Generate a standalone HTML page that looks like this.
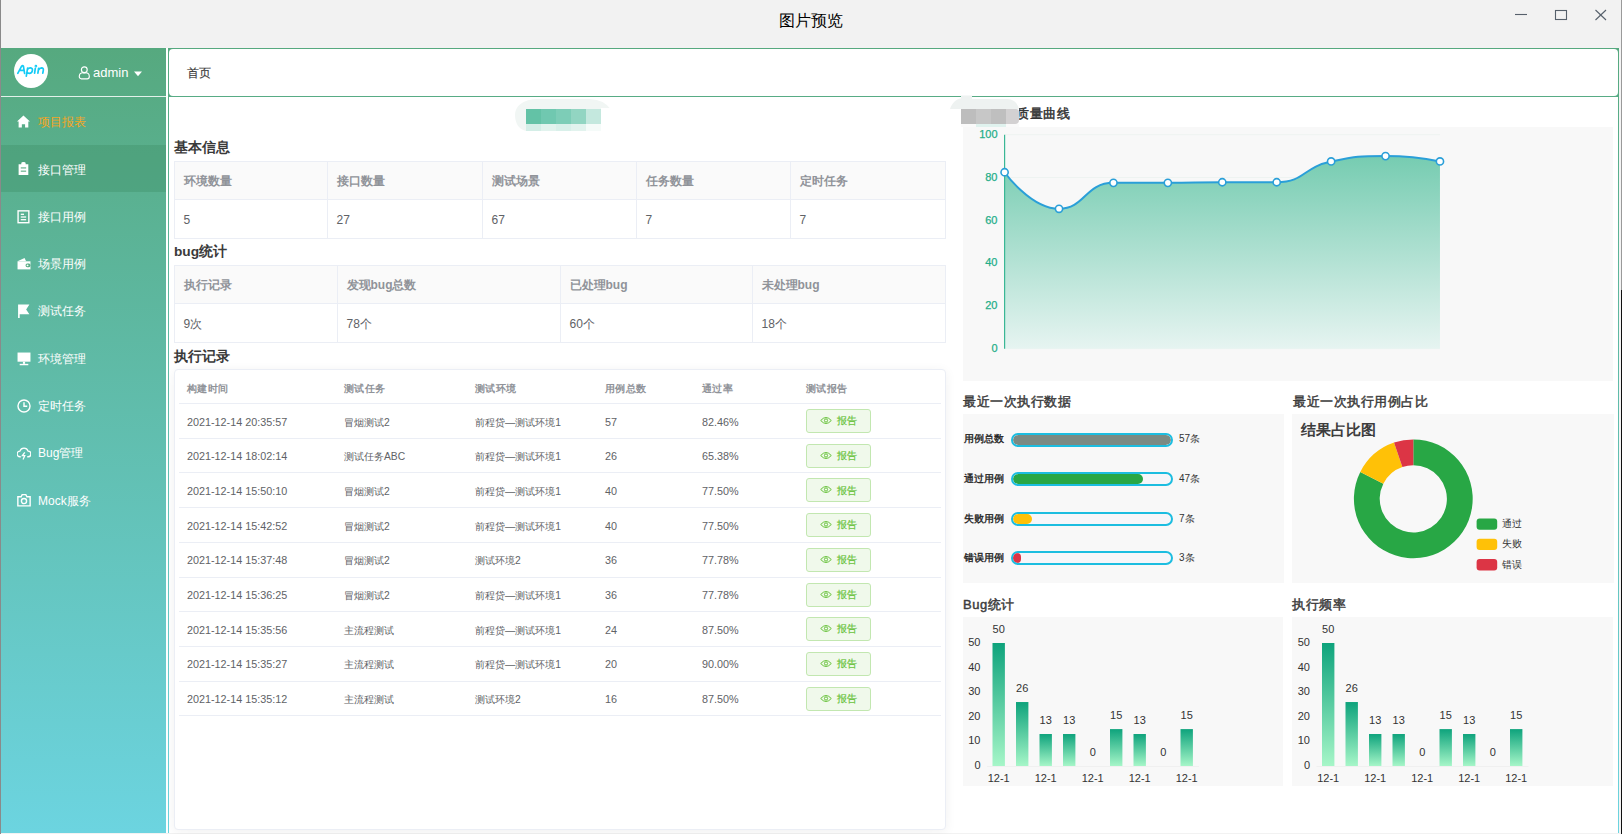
<!DOCTYPE html>
<html><head><meta charset="utf-8"><title>图片预览</title>
<style>
*{margin:0;padding:0;box-sizing:border-box}
html,body{width:1622px;height:834px;overflow:hidden;background:#f2f2f2;font-family:"Liberation Sans", sans-serif;position:relative}
.abs{position:absolute}
.t{position:absolute;white-space:nowrap}
</style></head><body>

<div class="abs" style="left:0;top:0;width:1px;height:834px;background:#8a8a8a"></div>
<div class="abs" style="left:1621px;top:0;width:1px;height:834px;background:#9a9a9a"></div>
<div class="abs" style="left:1621px;top:290px;width:1px;height:544px;background:#111"></div>
<div class="t" style="left:0;width:1622px;text-align:center;top:9px;font-size:16px;line-height:24px;color:#000">图片预览</div>
<svg class="abs" style="left:1500px;top:0" width="121" height="40"><g stroke="#56606b" stroke-width="1.1" fill="none"><line x1="15" y1="14.5" x2="27" y2="14.5"/><rect x="55.5" y="10.5" width="11" height="9"/><line x1="95.5" y1="10" x2="106" y2="20"/><line x1="106" y1="10" x2="95.5" y2="20"/></g></svg>
<div class="abs" style="left:1px;top:48px;width:1620px;height:785px;background:linear-gradient(to bottom,#56a97f 0%,#6cd4e0 100%)"></div>
<div class="abs" style="left:166px;top:48px;width:2px;height:785px;background:#fff"></div>
<div class="abs" style="left:1619px;top:48px;width:2px;height:785px;background:#f4f4f4"></div>
<div class="abs" style="left:1px;top:95.5px;width:165px;height:1.5px;background:#e3f1ea"></div>
<div class="abs" style="left:169px;top:49px;width:1449px;height:47px;background:#fff;border-radius:4px"></div>
<div class="t" style="left:187px;top:65px;font-size:12px;line-height:16px;color:#3a3a3a;-webkit-text-stroke:0.15px #3a3a3a">首页</div>
<div class="abs" style="left:169px;top:97px;width:1449px;height:736px;background:#fff"></div>
<div class="abs" style="left:14px;top:54px;width:34px;height:34px;border-radius:50%;background:#fff"></div>
<svg class="abs" style="left:0;top:0" width="60" height="90"><g fill="none" stroke="#14cbf6" stroke-width="1.7" stroke-linecap="round" stroke-linejoin="round"><path d="M17.8,73.3 L21.6,66.2 Q22.6,64.9 23.4,66.2 L24.6,73.3 M19.6,70.4 L24.1,70.4"/><path d="M27.6,68.2 L26.3,76.2 M27.4,69.6 Q28.5,67.8 30.6,67.9 Q32.8,68.2 32.4,70.6 Q31.9,73.2 29.4,73.3 Q27.6,73.3 26.9,72.2"/><path d="M35.3,68.4 L34.6,73.2"/><circle cx="35.9" cy="66.2" r="0.5"/><path d="M38.6,68.4 L37.9,73.2 M38.4,70 Q39.6,67.9 41.6,67.9 Q43.7,68 43.3,70.3 L42.8,73.2"/></g></svg>
<svg class="abs" style="left:78px;top:66px" width="13" height="14" viewBox="0 0 13 14"><g fill="none" stroke="#fff" stroke-width="1.15"><circle cx="6.3" cy="3.7" r="2.9"/><path d="M1.3,10.2 a3.6,3.6 0 0 1 3.6,-3.4 h2.8 a3.6,3.6 0 0 1 3.6,3.4 v0.6 a2,2 0 0 1 -2,2 h-6 a2,2 0 0 1 -2,-2 z"/></g></svg>
<div class="t" style="left:93px;top:64px;font-size:13px;line-height:18px;color:#fff">admin</div>
<svg class="abs" style="left:134px;top:71px" width="9" height="6"><path d="M0,0.5 L8,0.5 L4,5.2z" fill="#fff"/></svg>
<div class="abs" style="left:1px;top:145px;width:165px;height:47px;background:rgba(60,140,100,0.35)"></div>
<svg class="abs" style="left:17px;top:115.0px" width="14" height="14" viewBox="0 0 13 13"><path d="M6,0.5 L12,6 L10.5,6 L10.5,11.5 L7.5,11.5 L7.5,8.5 L4.5,8.5 L4.5,11.5 L1.5,11.5 L1.5,6 L0,6 Z" fill="#fff"/></svg>
<div class="t" style="left:38px;top:114.2px;font-size:12px;line-height:16px;color:#f5a623">项目报表</div>
<svg class="abs" style="left:17px;top:162.3px" width="14" height="14" viewBox="0 0 13 13"><path d="M1.5,2 h2.5 v-1 a2,1 0 0 1 4,0 v1 h2.5 v10 h-9 z" fill="#fff"/><g stroke="#56a97f" stroke-width="1"><line x1="3.5" y1="5.5" x2="8.5" y2="5.5"/><line x1="3.5" y1="8.5" x2="8.5" y2="8.5"/></g></svg>
<div class="t" style="left:38px;top:161.5px;font-size:12px;line-height:16px;color:#fff">接口管理</div>
<svg class="abs" style="left:17px;top:209.6px" width="14" height="14" viewBox="0 0 13 13"><rect x="1" y="0.8" width="10" height="11" fill="none" stroke="#fff" stroke-width="1.3"/><g stroke="#fff" stroke-width="1.2"><line x1="3.5" y1="4" x2="6.5" y2="4"/><line x1="3.5" y1="6.5" x2="8.5" y2="6.5"/><line x1="3.5" y1="9" x2="8.5" y2="9"/></g></svg>
<div class="t" style="left:38px;top:208.8px;font-size:12px;line-height:16px;color:#fff">接口用例</div>
<svg class="abs" style="left:17px;top:256.9px" width="14" height="14" viewBox="0 0 13 13"><path d="M0.5,4 L7,1 L8.5,4 Z" fill="#fff"/><rect x="0.5" y="4" width="12" height="7.5" fill="#fff"/><rect x="8" y="6" width="4.5" height="3.5" rx="1.5" fill="#58ac84"/><circle cx="9.8" cy="7.75" r="0.9" fill="#fff"/></svg>
<div class="t" style="left:38px;top:256.1px;font-size:12px;line-height:16px;color:#fff">场景用例</div>
<svg class="abs" style="left:17px;top:304.2px" width="14" height="14" viewBox="0 0 13 13"><path d="M1,0.5 h10.5 l-3,4.5 l3,4.5 h-9 v3.5 h-1.5z" fill="#fff"/></svg>
<div class="t" style="left:38px;top:303.4px;font-size:12px;line-height:16px;color:#fff">测试任务</div>
<svg class="abs" style="left:17px;top:351.5px" width="14" height="14" viewBox="0 0 13 13"><rect x="0.5" y="0.5" width="12" height="8.5" fill="#fff"/><rect x="5.5" y="9" width="2" height="2" fill="#fff"/><rect x="2.5" y="11" width="8" height="1.3" fill="#fff"/></svg>
<div class="t" style="left:38px;top:350.7px;font-size:12px;line-height:16px;color:#fff">环境管理</div>
<svg class="abs" style="left:17px;top:398.8px" width="14" height="14" viewBox="0 0 13 13"><circle cx="6.5" cy="6.5" r="5.6" fill="none" stroke="#fff" stroke-width="1.3"/><path d="M6.5,3 V6.8 H9.5" fill="none" stroke="#fff" stroke-width="1.3"/></svg>
<div class="t" style="left:38px;top:398.0px;font-size:12px;line-height:16px;color:#fff">定时任务</div>
<svg class="abs" style="left:17px;top:446.1px" width="14" height="14" viewBox="0 0 13 13"><path d="M3.5,10 h-0.8 a2.6,2.6 0 0 1 0,-5.2 a4,4 0 0 1 7.6,0 a2.6,2.6 0 0 1 0,5.2 h-0.8" fill="none" stroke="#fff" stroke-width="1.2"/><path d="M7.2,6 L5,9 H7.2 L5.6,12.5" fill="none" stroke="#fff" stroke-width="1.2"/></svg>
<div class="t" style="left:38px;top:445.3px;font-size:12px;line-height:16px;color:#fff">Bug管理</div>
<svg class="abs" style="left:17px;top:493.4px" width="14" height="14" viewBox="0 0 13 13"><path d="M0.8,3.5 h3 l1,-2 h3.4 l1,2 h3 v8.5 h-11.4z" fill="none" stroke="#fff" stroke-width="1.3"/><circle cx="6.5" cy="7.5" r="2.4" fill="none" stroke="#fff" stroke-width="1.3"/></svg>
<div class="t" style="left:38px;top:492.6px;font-size:12px;line-height:16px;color:#fff">Mock服务</div>
<svg class="abs" style="left:0;top:0" width="700" height="140"><path d="M601,108 L609.5,108 C604,101 597,99 585,99 L538,99 C523,99 515,106 515,115 C515,124 520,130.5 527,131 L601,131 Z" fill="#f1f6f4"/></svg>
<div class="abs" style="left:526px;top:109px;width:15px;height:15px;background:#63c2a6"></div>
<div class="abs" style="left:526px;top:124px;width:15px;height:7px;background:#d4eee7"></div>
<div class="abs" style="left:541px;top:109px;width:15px;height:15px;background:#70c8b0"></div>
<div class="abs" style="left:541px;top:124px;width:15px;height:7px;background:#e2f3ee"></div>
<div class="abs" style="left:556px;top:109px;width:15px;height:15px;background:#7dcdb7"></div>
<div class="abs" style="left:556px;top:124px;width:15px;height:7px;background:#d9f0ea"></div>
<div class="abs" style="left:571px;top:109px;width:15px;height:15px;background:#92d5c2"></div>
<div class="abs" style="left:571px;top:124px;width:15px;height:7px;background:#e2f3ee"></div>
<div class="abs" style="left:586px;top:109px;width:15px;height:15px;background:#c4e8de"></div>
<div class="abs" style="left:586px;top:124px;width:15px;height:7px;background:#f5fbf9"></div>
<div class="t" style="left:174px;top:137.8px;font-size:13.7px;line-height:20px;font-weight:bold;color:#3a3a3a;letter-spacing:0px;">基本信息</div>
<div class="abs" style="left:174px;top:161px;width:772px;height:78px;border:1px solid #ebeef5"></div>
<div class="abs" style="left:175px;top:162px;width:770px;height:38px;background:#fafafa;border-bottom:1px solid #ebeef5"></div>
<div class="abs" style="left:327px;top:161px;width:1px;height:78px;background:#ebeef5"></div>
<div class="abs" style="left:482px;top:161px;width:1px;height:78px;background:#ebeef5"></div>
<div class="abs" style="left:636px;top:161px;width:1px;height:78px;background:#ebeef5"></div>
<div class="abs" style="left:790px;top:161px;width:1px;height:78px;background:#ebeef5"></div>
<div class="t" style="left:183.5px;top:173px;font-size:12px;line-height:16px;font-weight:bold;color:#909399">环境数量</div>
<div class="t" style="left:183.5px;top:212.3px;font-size:12px;line-height:16px;color:#606266">5</div>
<div class="t" style="left:336.5px;top:173px;font-size:12px;line-height:16px;font-weight:bold;color:#909399">接口数量</div>
<div class="t" style="left:336.5px;top:212.3px;font-size:12px;line-height:16px;color:#606266">27</div>
<div class="t" style="left:491.5px;top:173px;font-size:12px;line-height:16px;font-weight:bold;color:#909399">测试场景</div>
<div class="t" style="left:491.5px;top:212.3px;font-size:12px;line-height:16px;color:#606266">67</div>
<div class="t" style="left:645.5px;top:173px;font-size:12px;line-height:16px;font-weight:bold;color:#909399">任务数量</div>
<div class="t" style="left:645.5px;top:212.3px;font-size:12px;line-height:16px;color:#606266">7</div>
<div class="t" style="left:799.5px;top:173px;font-size:12px;line-height:16px;font-weight:bold;color:#909399">定时任务</div>
<div class="t" style="left:799.5px;top:212.3px;font-size:12px;line-height:16px;color:#606266">7</div>
<div class="t" style="left:174px;top:242px;font-size:13.7px;line-height:20px;font-weight:bold;color:#3a3a3a;letter-spacing:0px;">bug统计</div>
<div class="abs" style="left:174px;top:265px;width:772px;height:78px;border:1px solid #ebeef5"></div>
<div class="abs" style="left:175px;top:266px;width:770px;height:38px;background:#fafafa;border-bottom:1px solid #ebeef5"></div>
<div class="abs" style="left:337px;top:265px;width:1px;height:78px;background:#ebeef5"></div>
<div class="abs" style="left:560px;top:265px;width:1px;height:78px;background:#ebeef5"></div>
<div class="abs" style="left:752px;top:265px;width:1px;height:78px;background:#ebeef5"></div>
<div class="t" style="left:183.5px;top:277px;font-size:12px;line-height:16px;font-weight:bold;color:#909399">执行记录</div>
<div class="t" style="left:183.5px;top:316.3px;font-size:12px;line-height:16px;color:#606266">9次</div>
<div class="t" style="left:346.5px;top:277px;font-size:12px;line-height:16px;font-weight:bold;color:#909399">发现bug总数</div>
<div class="t" style="left:346.5px;top:316.3px;font-size:12px;line-height:16px;color:#606266">78个</div>
<div class="t" style="left:569.5px;top:277px;font-size:12px;line-height:16px;font-weight:bold;color:#909399">已处理bug</div>
<div class="t" style="left:569.5px;top:316.3px;font-size:12px;line-height:16px;color:#606266">60个</div>
<div class="t" style="left:761.5px;top:277px;font-size:12px;line-height:16px;font-weight:bold;color:#909399">未处理bug</div>
<div class="t" style="left:761.5px;top:316.3px;font-size:12px;line-height:16px;color:#606266">18个</div>
<div class="t" style="left:174px;top:346.8px;font-size:13.7px;line-height:20px;font-weight:bold;color:#3a3a3a;letter-spacing:0px;">执行记录</div>
<div class="abs" style="left:174px;top:369px;width:772px;height:461px;border:1px solid #ebeef5;border-radius:4px;background:#fff;box-shadow:0 2px 12px rgba(0,0,0,0.06)"></div>
<div class="t" style="left:187px;top:380.5px;font-size:10.3px;line-height:15px;font-weight:bold;letter-spacing:0.3px;color:#909399">构建时间</div>
<div class="t" style="left:344px;top:380.5px;font-size:10.3px;line-height:15px;font-weight:bold;letter-spacing:0.3px;color:#909399">测试任务</div>
<div class="t" style="left:475px;top:380.5px;font-size:10.3px;line-height:15px;font-weight:bold;letter-spacing:0.3px;color:#909399">测试环境</div>
<div class="t" style="left:605px;top:380.5px;font-size:10.3px;line-height:15px;font-weight:bold;letter-spacing:0.3px;color:#909399">用例总数</div>
<div class="t" style="left:702px;top:380.5px;font-size:10.3px;line-height:15px;font-weight:bold;letter-spacing:0.3px;color:#909399">通过率</div>
<div class="t" style="left:806px;top:380.5px;font-size:10.3px;line-height:15px;font-weight:bold;letter-spacing:0.3px;color:#909399">测试报告</div>
<div class="abs" style="left:179px;top:403px;width:762px;height:1px;background:#ebeef5"></div>
<div class="t" style="left:187px;top:414.5px;font-size:10.8px;line-height:15px;color:#606266">2021-12-14 20:35:57</div>
<div class="t" style="left:344px;top:414.5px;font-size:10.3px;line-height:15px;color:#606266">冒烟测试2</div>
<div class="t" style="left:475px;top:414.5px;font-size:10.3px;line-height:15px;color:#606266">前程贷—测试环境1</div>
<div class="t" style="left:605px;top:414.5px;font-size:10.8px;line-height:15px;color:#606266">57</div>
<div class="t" style="left:702px;top:414.5px;font-size:10.8px;line-height:15px;color:#606266">82.46%</div>
<div class="abs" style="left:806px;top:409.0px;width:65px;height:24px;border:1px solid #c2e7b0;background:#f0f9eb;border-radius:3px"></div>
<svg class="abs" style="left:819.5px;top:416.0px" width="12" height="9" viewBox="0 0 12 9"><path d="M0.7,4.5 Q6,-1.5 11.3,4.5 Q6,10.5 0.7,4.5z" fill="none" stroke="#67c23a" stroke-width="1"/><circle cx="6" cy="4.5" r="1.6" fill="none" stroke="#67c23a" stroke-width="1"/></svg>
<div class="t" style="left:837px;top:413.2px;font-size:10.2px;line-height:15px;color:#67c23a;-webkit-text-stroke:0.2px #67c23a">报告</div>
<div class="abs" style="left:179px;top:437.7px;width:762px;height:1px;background:#ebeef5"></div>
<div class="t" style="left:187px;top:449.2px;font-size:10.8px;line-height:15px;color:#606266">2021-12-14 18:02:14</div>
<div class="t" style="left:344px;top:449.2px;font-size:10.3px;line-height:15px;color:#606266">测试任务ABC</div>
<div class="t" style="left:475px;top:449.2px;font-size:10.3px;line-height:15px;color:#606266">前程贷—测试环境1</div>
<div class="t" style="left:605px;top:449.2px;font-size:10.8px;line-height:15px;color:#606266">26</div>
<div class="t" style="left:702px;top:449.2px;font-size:10.8px;line-height:15px;color:#606266">65.38%</div>
<div class="abs" style="left:806px;top:443.7px;width:65px;height:24px;border:1px solid #c2e7b0;background:#f0f9eb;border-radius:3px"></div>
<svg class="abs" style="left:819.5px;top:450.7px" width="12" height="9" viewBox="0 0 12 9"><path d="M0.7,4.5 Q6,-1.5 11.3,4.5 Q6,10.5 0.7,4.5z" fill="none" stroke="#67c23a" stroke-width="1"/><circle cx="6" cy="4.5" r="1.6" fill="none" stroke="#67c23a" stroke-width="1"/></svg>
<div class="t" style="left:837px;top:447.9px;font-size:10.2px;line-height:15px;color:#67c23a;-webkit-text-stroke:0.2px #67c23a">报告</div>
<div class="abs" style="left:179px;top:472.4px;width:762px;height:1px;background:#ebeef5"></div>
<div class="t" style="left:187px;top:483.9px;font-size:10.8px;line-height:15px;color:#606266">2021-12-14 15:50:10</div>
<div class="t" style="left:344px;top:483.9px;font-size:10.3px;line-height:15px;color:#606266">冒烟测试2</div>
<div class="t" style="left:475px;top:483.9px;font-size:10.3px;line-height:15px;color:#606266">前程贷—测试环境1</div>
<div class="t" style="left:605px;top:483.9px;font-size:10.8px;line-height:15px;color:#606266">40</div>
<div class="t" style="left:702px;top:483.9px;font-size:10.8px;line-height:15px;color:#606266">77.50%</div>
<div class="abs" style="left:806px;top:478.4px;width:65px;height:24px;border:1px solid #c2e7b0;background:#f0f9eb;border-radius:3px"></div>
<svg class="abs" style="left:819.5px;top:485.4px" width="12" height="9" viewBox="0 0 12 9"><path d="M0.7,4.5 Q6,-1.5 11.3,4.5 Q6,10.5 0.7,4.5z" fill="none" stroke="#67c23a" stroke-width="1"/><circle cx="6" cy="4.5" r="1.6" fill="none" stroke="#67c23a" stroke-width="1"/></svg>
<div class="t" style="left:837px;top:482.6px;font-size:10.2px;line-height:15px;color:#67c23a;-webkit-text-stroke:0.2px #67c23a">报告</div>
<div class="abs" style="left:179px;top:507.1px;width:762px;height:1px;background:#ebeef5"></div>
<div class="t" style="left:187px;top:518.6px;font-size:10.8px;line-height:15px;color:#606266">2021-12-14 15:42:52</div>
<div class="t" style="left:344px;top:518.6px;font-size:10.3px;line-height:15px;color:#606266">冒烟测试2</div>
<div class="t" style="left:475px;top:518.6px;font-size:10.3px;line-height:15px;color:#606266">前程贷—测试环境1</div>
<div class="t" style="left:605px;top:518.6px;font-size:10.8px;line-height:15px;color:#606266">40</div>
<div class="t" style="left:702px;top:518.6px;font-size:10.8px;line-height:15px;color:#606266">77.50%</div>
<div class="abs" style="left:806px;top:513.1px;width:65px;height:24px;border:1px solid #c2e7b0;background:#f0f9eb;border-radius:3px"></div>
<svg class="abs" style="left:819.5px;top:520.1px" width="12" height="9" viewBox="0 0 12 9"><path d="M0.7,4.5 Q6,-1.5 11.3,4.5 Q6,10.5 0.7,4.5z" fill="none" stroke="#67c23a" stroke-width="1"/><circle cx="6" cy="4.5" r="1.6" fill="none" stroke="#67c23a" stroke-width="1"/></svg>
<div class="t" style="left:837px;top:517.3px;font-size:10.2px;line-height:15px;color:#67c23a;-webkit-text-stroke:0.2px #67c23a">报告</div>
<div class="abs" style="left:179px;top:541.8px;width:762px;height:1px;background:#ebeef5"></div>
<div class="t" style="left:187px;top:553.3px;font-size:10.8px;line-height:15px;color:#606266">2021-12-14 15:37:48</div>
<div class="t" style="left:344px;top:553.3px;font-size:10.3px;line-height:15px;color:#606266">冒烟测试2</div>
<div class="t" style="left:475px;top:553.3px;font-size:10.3px;line-height:15px;color:#606266">测试环境2</div>
<div class="t" style="left:605px;top:553.3px;font-size:10.8px;line-height:15px;color:#606266">36</div>
<div class="t" style="left:702px;top:553.3px;font-size:10.8px;line-height:15px;color:#606266">77.78%</div>
<div class="abs" style="left:806px;top:547.8px;width:65px;height:24px;border:1px solid #c2e7b0;background:#f0f9eb;border-radius:3px"></div>
<svg class="abs" style="left:819.5px;top:554.8px" width="12" height="9" viewBox="0 0 12 9"><path d="M0.7,4.5 Q6,-1.5 11.3,4.5 Q6,10.5 0.7,4.5z" fill="none" stroke="#67c23a" stroke-width="1"/><circle cx="6" cy="4.5" r="1.6" fill="none" stroke="#67c23a" stroke-width="1"/></svg>
<div class="t" style="left:837px;top:552.0px;font-size:10.2px;line-height:15px;color:#67c23a;-webkit-text-stroke:0.2px #67c23a">报告</div>
<div class="abs" style="left:179px;top:576.5px;width:762px;height:1px;background:#ebeef5"></div>
<div class="t" style="left:187px;top:588.0px;font-size:10.8px;line-height:15px;color:#606266">2021-12-14 15:36:25</div>
<div class="t" style="left:344px;top:588.0px;font-size:10.3px;line-height:15px;color:#606266">冒烟测试2</div>
<div class="t" style="left:475px;top:588.0px;font-size:10.3px;line-height:15px;color:#606266">前程贷—测试环境1</div>
<div class="t" style="left:605px;top:588.0px;font-size:10.8px;line-height:15px;color:#606266">36</div>
<div class="t" style="left:702px;top:588.0px;font-size:10.8px;line-height:15px;color:#606266">77.78%</div>
<div class="abs" style="left:806px;top:582.5px;width:65px;height:24px;border:1px solid #c2e7b0;background:#f0f9eb;border-radius:3px"></div>
<svg class="abs" style="left:819.5px;top:589.5px" width="12" height="9" viewBox="0 0 12 9"><path d="M0.7,4.5 Q6,-1.5 11.3,4.5 Q6,10.5 0.7,4.5z" fill="none" stroke="#67c23a" stroke-width="1"/><circle cx="6" cy="4.5" r="1.6" fill="none" stroke="#67c23a" stroke-width="1"/></svg>
<div class="t" style="left:837px;top:586.7px;font-size:10.2px;line-height:15px;color:#67c23a;-webkit-text-stroke:0.2px #67c23a">报告</div>
<div class="abs" style="left:179px;top:611.2px;width:762px;height:1px;background:#ebeef5"></div>
<div class="t" style="left:187px;top:622.7px;font-size:10.8px;line-height:15px;color:#606266">2021-12-14 15:35:56</div>
<div class="t" style="left:344px;top:622.7px;font-size:10.3px;line-height:15px;color:#606266">主流程测试</div>
<div class="t" style="left:475px;top:622.7px;font-size:10.3px;line-height:15px;color:#606266">前程贷—测试环境1</div>
<div class="t" style="left:605px;top:622.7px;font-size:10.8px;line-height:15px;color:#606266">24</div>
<div class="t" style="left:702px;top:622.7px;font-size:10.8px;line-height:15px;color:#606266">87.50%</div>
<div class="abs" style="left:806px;top:617.2px;width:65px;height:24px;border:1px solid #c2e7b0;background:#f0f9eb;border-radius:3px"></div>
<svg class="abs" style="left:819.5px;top:624.2px" width="12" height="9" viewBox="0 0 12 9"><path d="M0.7,4.5 Q6,-1.5 11.3,4.5 Q6,10.5 0.7,4.5z" fill="none" stroke="#67c23a" stroke-width="1"/><circle cx="6" cy="4.5" r="1.6" fill="none" stroke="#67c23a" stroke-width="1"/></svg>
<div class="t" style="left:837px;top:621.4px;font-size:10.2px;line-height:15px;color:#67c23a;-webkit-text-stroke:0.2px #67c23a">报告</div>
<div class="abs" style="left:179px;top:645.9px;width:762px;height:1px;background:#ebeef5"></div>
<div class="t" style="left:187px;top:657.4px;font-size:10.8px;line-height:15px;color:#606266">2021-12-14 15:35:27</div>
<div class="t" style="left:344px;top:657.4px;font-size:10.3px;line-height:15px;color:#606266">主流程测试</div>
<div class="t" style="left:475px;top:657.4px;font-size:10.3px;line-height:15px;color:#606266">前程贷—测试环境1</div>
<div class="t" style="left:605px;top:657.4px;font-size:10.8px;line-height:15px;color:#606266">20</div>
<div class="t" style="left:702px;top:657.4px;font-size:10.8px;line-height:15px;color:#606266">90.00%</div>
<div class="abs" style="left:806px;top:651.9px;width:65px;height:24px;border:1px solid #c2e7b0;background:#f0f9eb;border-radius:3px"></div>
<svg class="abs" style="left:819.5px;top:658.9px" width="12" height="9" viewBox="0 0 12 9"><path d="M0.7,4.5 Q6,-1.5 11.3,4.5 Q6,10.5 0.7,4.5z" fill="none" stroke="#67c23a" stroke-width="1"/><circle cx="6" cy="4.5" r="1.6" fill="none" stroke="#67c23a" stroke-width="1"/></svg>
<div class="t" style="left:837px;top:656.1px;font-size:10.2px;line-height:15px;color:#67c23a;-webkit-text-stroke:0.2px #67c23a">报告</div>
<div class="abs" style="left:179px;top:680.6px;width:762px;height:1px;background:#ebeef5"></div>
<div class="t" style="left:187px;top:692.1px;font-size:10.8px;line-height:15px;color:#606266">2021-12-14 15:35:12</div>
<div class="t" style="left:344px;top:692.1px;font-size:10.3px;line-height:15px;color:#606266">主流程测试</div>
<div class="t" style="left:475px;top:692.1px;font-size:10.3px;line-height:15px;color:#606266">测试环境2</div>
<div class="t" style="left:605px;top:692.1px;font-size:10.8px;line-height:15px;color:#606266">16</div>
<div class="t" style="left:702px;top:692.1px;font-size:10.8px;line-height:15px;color:#606266">87.50%</div>
<div class="abs" style="left:806px;top:686.6px;width:65px;height:24px;border:1px solid #c2e7b0;background:#f0f9eb;border-radius:3px"></div>
<svg class="abs" style="left:819.5px;top:693.6px" width="12" height="9" viewBox="0 0 12 9"><path d="M0.7,4.5 Q6,-1.5 11.3,4.5 Q6,10.5 0.7,4.5z" fill="none" stroke="#67c23a" stroke-width="1"/><circle cx="6" cy="4.5" r="1.6" fill="none" stroke="#67c23a" stroke-width="1"/></svg>
<div class="t" style="left:837px;top:690.8px;font-size:10.2px;line-height:15px;color:#67c23a;-webkit-text-stroke:0.2px #67c23a">报告</div>
<div class="abs" style="left:179px;top:715.3px;width:762px;height:1px;background:#ebeef5"></div>
<svg class="abs" style="left:940px;top:90px" width="90" height="45"><path d="M10,19 C12,13 16,9 21,8.5 L21,5.5 L32,5.5 L32,9 L67,9 C74,9 78,14 79,19 Z" fill="#eef2f1"/><rect x="21" y="34" width="58" height="3" fill="#fafafa"/><rect x="36" y="34" width="30" height="4.5" fill="#e0f2ee"/></svg>
<div class="abs" style="left:961px;top:109px;width:15px;height:15px;background:#bdbdbd;"></div>
<div class="abs" style="left:976px;top:109px;width:15px;height:15px;background:#c7c7c7;"></div>
<div class="abs" style="left:991px;top:109px;width:15px;height:15px;background:#bfbfbf;"></div>
<div class="abs" style="left:1006px;top:109px;width:13px;height:15px;background:#d3d1d2;border-radius:0 3px 4px 0;"></div>
<div class="abs" style="left:1019px;top:104px;width:60px;height:20px;overflow:hidden"><div class="t" style="left:-3px;top:0;font-size:13px;line-height:20px;color:#333;letter-spacing:0.5px;-webkit-text-stroke:0.45px #333">质量曲线</div></div>
<div class="abs" style="left:963px;top:127px;width:650px;height:254px;background:#f8f8f8"></div>
<svg class="abs" style="left:0;top:0" width="1622" height="834"><defs><linearGradient id="ag" x1="0" y1="0" x2="0" y2="1"><stop offset="0" stop-color="#76ccb1"/><stop offset="1" stop-color="#e6f4f1"/></linearGradient><linearGradient id="bg" x1="0" y1="0" x2="0" y2="1"><stop offset="0" stop-color="#0ea37c"/><stop offset="1" stop-color="#a6f6c8"/></linearGradient></defs><line x1="1005" y1="348.7" x2="1440" y2="348.7" stroke="#eef3f1" stroke-width="1"/><line x1="1005" y1="305.9" x2="1440" y2="305.9" stroke="#eef3f1" stroke-width="1"/><line x1="1005" y1="263.1" x2="1440" y2="263.1" stroke="#eef3f1" stroke-width="1"/><line x1="1005" y1="220.3" x2="1440" y2="220.3" stroke="#eef3f1" stroke-width="1"/><line x1="1005" y1="177.5" x2="1440" y2="177.5" stroke="#eef3f1" stroke-width="1"/><line x1="1005" y1="134.7" x2="1440" y2="134.7" stroke="#eef3f1" stroke-width="1"/><path d="M1004.60,172.24 C1004.60,172.24 1030.67,208.79 1059.02,208.79 C1085.09,208.79 1084.84,182.85 1113.44,182.85 C1139.26,182.85 1140.65,182.85 1167.86,182.85 C1195.07,182.85 1195.07,182.25 1222.28,182.25 C1249.49,182.25 1250.42,182.25 1276.70,182.25 C1304.84,182.25 1303.05,167.15 1331.12,161.45 C1357.47,156.10 1358.33,156.10 1385.54,156.10 C1412.75,156.10 1439.96,161.45 1439.96,161.45 L1439.96,348.70 L1004.6,348.70 Z" fill="url(#ag)"/><line x1="1004.6" y1="134.7" x2="1004.6" y2="348.7" stroke="#3ab795" stroke-width="1.2"/><path d="M1004.60,172.24 C1004.60,172.24 1030.67,208.79 1059.02,208.79 C1085.09,208.79 1084.84,182.85 1113.44,182.85 C1139.26,182.85 1140.65,182.85 1167.86,182.85 C1195.07,182.85 1195.07,182.25 1222.28,182.25 C1249.49,182.25 1250.42,182.25 1276.70,182.25 C1304.84,182.25 1303.05,167.15 1331.12,161.45 C1357.47,156.10 1358.33,156.10 1385.54,156.10 C1412.75,156.10 1439.96,161.45 1439.96,161.45" fill="none" stroke="#2a9fd8" stroke-width="2"/><circle cx="1004.60" cy="172.24" r="3.6" fill="#fff" stroke="#2a9fd8" stroke-width="1.6"/><circle cx="1059.02" cy="208.79" r="3.6" fill="#fff" stroke="#2a9fd8" stroke-width="1.6"/><circle cx="1113.44" cy="182.85" r="3.6" fill="#fff" stroke="#2a9fd8" stroke-width="1.6"/><circle cx="1167.86" cy="182.85" r="3.6" fill="#fff" stroke="#2a9fd8" stroke-width="1.6"/><circle cx="1222.28" cy="182.25" r="3.6" fill="#fff" stroke="#2a9fd8" stroke-width="1.6"/><circle cx="1276.70" cy="182.25" r="3.6" fill="#fff" stroke="#2a9fd8" stroke-width="1.6"/><circle cx="1331.12" cy="161.45" r="3.6" fill="#fff" stroke="#2a9fd8" stroke-width="1.6"/><circle cx="1385.54" cy="156.10" r="3.6" fill="#fff" stroke="#2a9fd8" stroke-width="1.6"/><circle cx="1439.96" cy="161.45" r="3.6" fill="#fff" stroke="#2a9fd8" stroke-width="1.6"/><text x="997.5" y="351.9" text-anchor="end" font-family='"Liberation Sans", sans-serif' font-size="11" fill="#25ae89" stroke="#25ae89" stroke-width="0.25">0</text><text x="997.5" y="309.1" text-anchor="end" font-family='"Liberation Sans", sans-serif' font-size="11" fill="#25ae89" stroke="#25ae89" stroke-width="0.25">20</text><text x="997.5" y="266.3" text-anchor="end" font-family='"Liberation Sans", sans-serif' font-size="11" fill="#25ae89" stroke="#25ae89" stroke-width="0.25">40</text><text x="997.5" y="223.5" text-anchor="end" font-family='"Liberation Sans", sans-serif' font-size="11" fill="#25ae89" stroke="#25ae89" stroke-width="0.25">60</text><text x="997.5" y="180.7" text-anchor="end" font-family='"Liberation Sans", sans-serif' font-size="11" fill="#25ae89" stroke="#25ae89" stroke-width="0.25">80</text><text x="997.5" y="137.9" text-anchor="end" font-family='"Liberation Sans", sans-serif' font-size="11" fill="#25ae89" stroke="#25ae89" stroke-width="0.25">100</text></svg>
<div class="t" style="left:963px;top:391.6px;font-size:13px;line-height:20px;font-weight:normal;color:#3c3c3c;letter-spacing:0.5px;-webkit-text-stroke:0.45px #3c3c3c;">最近一次执行数据</div>
<div class="t" style="left:1293px;top:391.6px;font-size:13px;line-height:20px;font-weight:normal;color:#3c3c3c;letter-spacing:0.5px;-webkit-text-stroke:0.45px #3c3c3c;">最近一次执行用例占比</div>
<div class="t" style="left:963px;top:595px;font-size:13px;line-height:20px;font-weight:normal;color:#3c3c3c;letter-spacing:0.5px;-webkit-text-stroke:0.45px #3c3c3c;">Bug统计</div>
<div class="t" style="left:1292px;top:595px;font-size:13px;line-height:20px;font-weight:normal;color:#3c3c3c;letter-spacing:0.5px;-webkit-text-stroke:0.45px #3c3c3c;">执行频率</div>
<div class="abs" style="left:963px;top:414px;width:321px;height:169px;background:#f8f8f8"></div>
<div class="t" style="left:964px;top:432.4px;font-size:10px;line-height:14px;font-weight:normal;color:#222;-webkit-text-stroke:0.35px #222">用例总数</div>
<div class="abs" style="left:1011px;top:432.6px;width:162px;height:14px;border:2px solid #1cbde0;border-radius:7px;background:#f6f6f9;overflow:hidden"><div style="width:100.0%;height:100%;background:#7b8a83;border-radius:5px"></div></div>
<div class="t" style="left:1179px;top:432.4px;font-size:10px;line-height:14px;color:#333">57条</div>
<div class="t" style="left:964px;top:471.9px;font-size:10px;line-height:14px;font-weight:normal;color:#222;-webkit-text-stroke:0.35px #222">通过用例</div>
<div class="abs" style="left:1011px;top:472.1px;width:162px;height:14px;border:2px solid #1cbde0;border-radius:7px;background:#f6f6f9;overflow:hidden"><div style="width:82.5%;height:100%;background:#28a745;border-radius:5px"></div></div>
<div class="t" style="left:1179px;top:471.9px;font-size:10px;line-height:14px;color:#333">47条</div>
<div class="t" style="left:964px;top:511.5px;font-size:10px;line-height:14px;font-weight:normal;color:#222;-webkit-text-stroke:0.35px #222">失败用例</div>
<div class="abs" style="left:1011px;top:511.7px;width:162px;height:14px;border:2px solid #1cbde0;border-radius:7px;background:#f6f6f9;overflow:hidden"><div style="width:12.3%;height:100%;background:#ffc107;border-radius:5px"></div></div>
<div class="t" style="left:1179px;top:511.5px;font-size:10px;line-height:14px;color:#333">7条</div>
<div class="t" style="left:964px;top:551.0px;font-size:10px;line-height:14px;font-weight:normal;color:#222;-webkit-text-stroke:0.35px #222">错误用例</div>
<div class="abs" style="left:1011px;top:551.2px;width:162px;height:14px;border:2px solid #1cbde0;border-radius:7px;background:#f6f6f9;overflow:hidden"><div style="width:5.3%;height:100%;background:#dc3545;border-radius:5px"></div></div>
<div class="t" style="left:1179px;top:551.0px;font-size:10px;line-height:14px;color:#333">3条</div>
<div class="abs" style="left:1292px;top:414px;width:322px;height:169px;background:#f8f8f8"></div>
<div class="t" style="left:1301.3px;top:419px;font-size:15px;line-height:22px;font-weight:bold;color:#3d3d3d">结果占比图</div>
<div class="abs" style="left:963px;top:617px;width:320px;height:169px;background:#f8f8f8"></div>
<div class="abs" style="left:1292px;top:617px;width:321px;height:169px;background:#f8f8f8"></div>
<svg class="abs" style="left:0;top:0" width="1622" height="834"><path d="M1413.30,439.40 A59.4,59.4 0 1 1 1360.30,471.98 L1383.32,483.63 A33.6,33.6 0 1 0 1413.30,465.20 Z" fill="#28a745"/><path d="M1360.30,471.98 A59.4,59.4 0 0 1 1394.01,442.62 L1402.39,467.02 A33.6,33.6 0 0 0 1383.32,483.63 Z" fill="#ffc107"/><path d="M1394.01,442.62 A59.4,59.4 0 0 1 1413.30,439.40 L1413.30,465.20 A33.6,33.6 0 0 0 1402.39,467.02 Z" fill="#dc3545"/><rect x="1476.6" y="518.4" width="20.6" height="11.3" rx="3" fill="#28a745"/><rect x="1476.6" y="538.8" width="20.6" height="11.3" rx="3" fill="#ffc107"/><rect x="1476.6" y="559.1" width="20.6" height="11.3" rx="3" fill="#dc3545"/><line x1="987" y1="766.5" x2="1199" y2="766.5" stroke="#f0f0f0" stroke-width="1"/><text x="980.5" y="768.9" text-anchor="end" font-family='"Liberation Sans", sans-serif' font-size="11" fill="#333">0</text><text x="980.5" y="744.3" text-anchor="end" font-family='"Liberation Sans", sans-serif' font-size="11" fill="#333">10</text><text x="980.5" y="719.7" text-anchor="end" font-family='"Liberation Sans", sans-serif' font-size="11" fill="#333">20</text><text x="980.5" y="695.1" text-anchor="end" font-family='"Liberation Sans", sans-serif' font-size="11" fill="#333">30</text><text x="980.5" y="670.5" text-anchor="end" font-family='"Liberation Sans", sans-serif' font-size="11" fill="#333">40</text><text x="980.5" y="645.9" text-anchor="end" font-family='"Liberation Sans", sans-serif' font-size="11" fill="#333">50</text><rect x="992.50" y="643.00" width="12.4" height="123.00" fill="url(#bg)"/><text x="998.70" y="632.5" text-anchor="middle" font-family='"Liberation Sans", sans-serif' font-size="11" fill="#333">50</text><text x="998.70" y="782.0" text-anchor="middle" font-family='"Liberation Sans", sans-serif' font-size="11" fill="#333">12-1</text><rect x="1016.00" y="702.04" width="12.4" height="63.96" fill="url(#bg)"/><text x="1022.20" y="691.5" text-anchor="middle" font-family='"Liberation Sans", sans-serif' font-size="11" fill="#333">26</text><rect x="1039.50" y="734.02" width="12.4" height="31.98" fill="url(#bg)"/><text x="1045.70" y="723.5" text-anchor="middle" font-family='"Liberation Sans", sans-serif' font-size="11" fill="#333">13</text><text x="1045.70" y="782.0" text-anchor="middle" font-family='"Liberation Sans", sans-serif' font-size="11" fill="#333">12-1</text><rect x="1063.00" y="734.02" width="12.4" height="31.98" fill="url(#bg)"/><text x="1069.20" y="723.5" text-anchor="middle" font-family='"Liberation Sans", sans-serif' font-size="11" fill="#333">13</text><text x="1092.70" y="755.5" text-anchor="middle" font-family='"Liberation Sans", sans-serif' font-size="11" fill="#333">0</text><text x="1092.70" y="782.0" text-anchor="middle" font-family='"Liberation Sans", sans-serif' font-size="11" fill="#333">12-1</text><rect x="1110.00" y="729.10" width="12.4" height="36.90" fill="url(#bg)"/><text x="1116.20" y="718.6" text-anchor="middle" font-family='"Liberation Sans", sans-serif' font-size="11" fill="#333">15</text><rect x="1133.50" y="734.02" width="12.4" height="31.98" fill="url(#bg)"/><text x="1139.70" y="723.5" text-anchor="middle" font-family='"Liberation Sans", sans-serif' font-size="11" fill="#333">13</text><text x="1139.70" y="782.0" text-anchor="middle" font-family='"Liberation Sans", sans-serif' font-size="11" fill="#333">12-1</text><text x="1163.20" y="755.5" text-anchor="middle" font-family='"Liberation Sans", sans-serif' font-size="11" fill="#333">0</text><rect x="1180.50" y="729.10" width="12.4" height="36.90" fill="url(#bg)"/><text x="1186.70" y="718.6" text-anchor="middle" font-family='"Liberation Sans", sans-serif' font-size="11" fill="#333">15</text><text x="1186.70" y="782.0" text-anchor="middle" font-family='"Liberation Sans", sans-serif' font-size="11" fill="#333">12-1</text><line x1="1316.5" y1="766.5" x2="1528.5" y2="766.5" stroke="#f0f0f0" stroke-width="1"/><text x="1310.0" y="768.9" text-anchor="end" font-family='"Liberation Sans", sans-serif' font-size="11" fill="#333">0</text><text x="1310.0" y="744.3" text-anchor="end" font-family='"Liberation Sans", sans-serif' font-size="11" fill="#333">10</text><text x="1310.0" y="719.7" text-anchor="end" font-family='"Liberation Sans", sans-serif' font-size="11" fill="#333">20</text><text x="1310.0" y="695.1" text-anchor="end" font-family='"Liberation Sans", sans-serif' font-size="11" fill="#333">30</text><text x="1310.0" y="670.5" text-anchor="end" font-family='"Liberation Sans", sans-serif' font-size="11" fill="#333">40</text><text x="1310.0" y="645.9" text-anchor="end" font-family='"Liberation Sans", sans-serif' font-size="11" fill="#333">50</text><rect x="1322.00" y="643.00" width="12.4" height="123.00" fill="url(#bg)"/><text x="1328.20" y="632.5" text-anchor="middle" font-family='"Liberation Sans", sans-serif' font-size="11" fill="#333">50</text><text x="1328.20" y="782.0" text-anchor="middle" font-family='"Liberation Sans", sans-serif' font-size="11" fill="#333">12-1</text><rect x="1345.50" y="702.04" width="12.4" height="63.96" fill="url(#bg)"/><text x="1351.70" y="691.5" text-anchor="middle" font-family='"Liberation Sans", sans-serif' font-size="11" fill="#333">26</text><rect x="1369.00" y="734.02" width="12.4" height="31.98" fill="url(#bg)"/><text x="1375.20" y="723.5" text-anchor="middle" font-family='"Liberation Sans", sans-serif' font-size="11" fill="#333">13</text><text x="1375.20" y="782.0" text-anchor="middle" font-family='"Liberation Sans", sans-serif' font-size="11" fill="#333">12-1</text><rect x="1392.50" y="734.02" width="12.4" height="31.98" fill="url(#bg)"/><text x="1398.70" y="723.5" text-anchor="middle" font-family='"Liberation Sans", sans-serif' font-size="11" fill="#333">13</text><text x="1422.20" y="755.5" text-anchor="middle" font-family='"Liberation Sans", sans-serif' font-size="11" fill="#333">0</text><text x="1422.20" y="782.0" text-anchor="middle" font-family='"Liberation Sans", sans-serif' font-size="11" fill="#333">12-1</text><rect x="1439.50" y="729.10" width="12.4" height="36.90" fill="url(#bg)"/><text x="1445.70" y="718.6" text-anchor="middle" font-family='"Liberation Sans", sans-serif' font-size="11" fill="#333">15</text><rect x="1463.00" y="734.02" width="12.4" height="31.98" fill="url(#bg)"/><text x="1469.20" y="723.5" text-anchor="middle" font-family='"Liberation Sans", sans-serif' font-size="11" fill="#333">13</text><text x="1469.20" y="782.0" text-anchor="middle" font-family='"Liberation Sans", sans-serif' font-size="11" fill="#333">12-1</text><text x="1492.70" y="755.5" text-anchor="middle" font-family='"Liberation Sans", sans-serif' font-size="11" fill="#333">0</text><rect x="1510.00" y="729.10" width="12.4" height="36.90" fill="url(#bg)"/><text x="1516.20" y="718.6" text-anchor="middle" font-family='"Liberation Sans", sans-serif' font-size="11" fill="#333">15</text><text x="1516.20" y="782.0" text-anchor="middle" font-family='"Liberation Sans", sans-serif' font-size="11" fill="#333">12-1</text></svg>
<div class="t" style="left:1501.5px;top:517.0px;font-size:10px;line-height:14px;color:#333">通过</div>
<div class="t" style="left:1501.5px;top:537.4px;font-size:10px;line-height:14px;color:#333">失败</div>
<div class="t" style="left:1501.5px;top:557.7px;font-size:10px;line-height:14px;color:#333">错误</div>
</body></html>
